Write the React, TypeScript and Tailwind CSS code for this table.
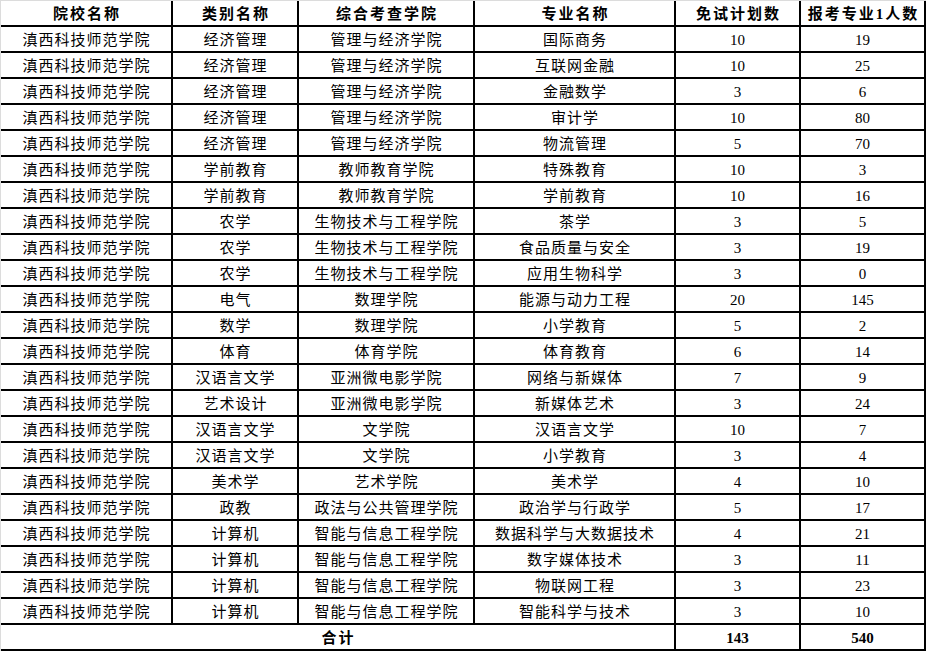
import React from "react";

const rows: [string, string, string, string, string, string][] = [
  ["滇西科技师范学院", "经济管理", "管理与经济学院", "国际商务", "10", "19"],
  ["滇西科技师范学院", "经济管理", "管理与经济学院", "互联网金融", "10", "25"],
  ["滇西科技师范学院", "经济管理", "管理与经济学院", "金融数学", "3", "6"],
  ["滇西科技师范学院", "经济管理", "管理与经济学院", "审计学", "10", "80"],
  ["滇西科技师范学院", "经济管理", "管理与经济学院", "物流管理", "5", "70"],
  ["滇西科技师范学院", "学前教育", "教师教育学院", "特殊教育", "10", "3"],
  ["滇西科技师范学院", "学前教育", "教师教育学院", "学前教育", "10", "16"],
  ["滇西科技师范学院", "农学", "生物技术与工程学院", "茶学", "3", "5"],
  ["滇西科技师范学院", "农学", "生物技术与工程学院", "食品质量与安全", "3", "19"],
  ["滇西科技师范学院", "农学", "生物技术与工程学院", "应用生物科学", "3", "0"],
  ["滇西科技师范学院", "电气", "数理学院", "能源与动力工程", "20", "145"],
  ["滇西科技师范学院", "数学", "数理学院", "小学教育", "5", "2"],
  ["滇西科技师范学院", "体育", "体育学院", "体育教育", "6", "14"],
  ["滇西科技师范学院", "汉语言文学", "亚洲微电影学院", "网络与新媒体", "7", "9"],
  ["滇西科技师范学院", "艺术设计", "亚洲微电影学院", "新媒体艺术", "3", "24"],
  ["滇西科技师范学院", "汉语言文学", "文学院", "汉语言文学", "10", "7"],
  ["滇西科技师范学院", "汉语言文学", "文学院", "小学教育", "3", "4"],
  ["滇西科技师范学院", "美术学", "艺术学院", "美术学", "4", "10"],
  ["滇西科技师范学院", "政教", "政法与公共管理学院", "政治学与行政学", "5", "17"],
  ["滇西科技师范学院", "计算机", "智能与信息工程学院", "数据科学与大数据技术", "4", "21"],
  ["滇西科技师范学院", "计算机", "智能与信息工程学院", "数字媒体技术", "3", "11"],
  ["滇西科技师范学院", "计算机", "智能与信息工程学院", "物联网工程", "3", "23"],
  ["滇西科技师范学院", "计算机", "智能与信息工程学院", "智能科学与技术", "3", "10"],
];

const headers = ["院校名称", "类别名称", "综合考查学院", "专业名称", "免试计划数", "报考专业1人数"];

const cell =
  "box-border border-r-2 border-b-2 border-black bg-white flex items-center justify-center leading-none whitespace-nowrap pt-[2px]";

export default function App() {
  return (
    <div className="w-[926px] h-[651px] bg-[#dcdcdc] pt-[1px] pl-[1px] font-['Liberation_Serif','Noto_Sans_CJK_SC',serif] text-[15px] text-black overflow-hidden">
      <div className="grid grid-cols-[172px_126px_176px_201px_125px_125px] auto-rows-[26px]">
        {headers.map((h, i) => (
          <div key={i} className={`${cell} font-bold tracking-[2px] pl-[2px]`}>
            {h}
          </div>
        ))}
        {rows.map((r, ri) => (
          <React.Fragment key={ri}>
            {r.map((v, ci) => (
              <div key={ci} className={`${cell} ${ci < 4 ? "tracking-[1px] pl-[1px]" : ""}`}>
                {v}
              </div>
            ))}
          </React.Fragment>
        ))}
        <div className={`${cell} col-span-4 font-bold tracking-[2px] pl-[2px]`}>合计</div>
        <div className={`${cell} font-bold`}>143</div>
        <div className={`${cell} font-bold`}>540</div>
      </div>
    </div>
  );
}
